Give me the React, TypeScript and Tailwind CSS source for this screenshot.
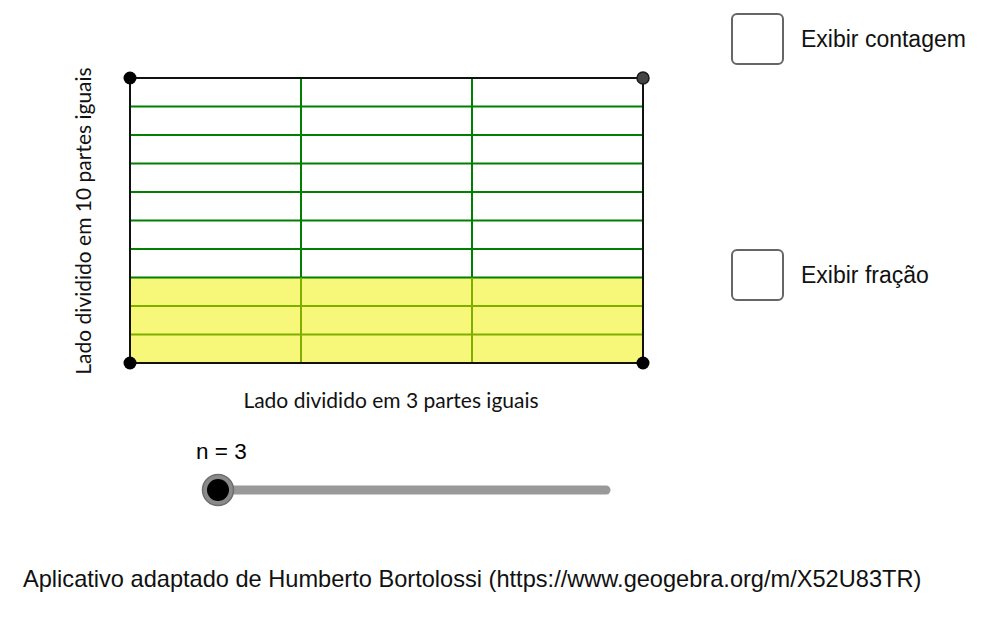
import React from 'react';

const X0 = 130;
const X1 = 643;
const Y0 = 78;
const Y1 = 363;
const ROWS = 10;
const COLS = 3;
const SHADED = 3;

const GREEN = '#007f00';
const LIME = '#7fb000';

function Figure() {
  const rowH = (Y1 - Y0) / ROWS;
  const colW = (X1 - X0) / COLS;
  const shadeTop = Y1 - rowH * SHADED;

  return (
    <svg width={700} height={552} className="block shrink-0">
      {/* shaded rows */}
      <rect x={X0} y={shadeTop} width={X1 - X0} height={Y1 - shadeTop} fill="#f7f779" />

      {/* horizontal divisions */}
      {Array.from({ length: ROWS - 1 }, (_, i) => {
        const y = Y0 + rowH * (i + 1);
        return (
          <line key={'h' + i} x1={X0} x2={X1} y1={y} y2={y} stroke={y > shadeTop + 1 ? LIME : GREEN} strokeWidth={2} />
        );
      })}

      {/* vertical divisions */}
      {Array.from({ length: COLS - 1 }, (_, i) => {
        const x = X0 + colW * (i + 1);
        return (
          <g key={'v' + i}>
            <line x1={x} x2={x} y1={Y0} y2={shadeTop} stroke={GREEN} strokeWidth={2} />
            <line x1={x} x2={x} y1={shadeTop} y2={Y1} stroke={LIME} strokeWidth={2} />
          </g>
        );
      })}

      {/* outline */}
      <rect x={X0} y={Y0} width={X1 - X0} height={Y1 - Y0} fill="none" stroke="#111" strokeWidth={2} />

      {/* corner points */}
      <circle cx={X0} cy={Y0} r={6.5} fill="#000" />
      <circle cx={X0} cy={Y1} r={6.5} fill="#000" />
      <circle cx={X1} cy={Y1} r={6.5} fill="#000" />
      <circle cx={X1} cy={Y0} r={6} fill="#444" stroke="#1a1a1a" strokeWidth={1.5} />

      {/* labels */}
      <text
        x={391}
        y={408}
        textAnchor="middle"
        fontFamily="Lato, 'DejaVu Sans', sans-serif"
        fontSize={21}
        fill="#111"
      >
        Lado dividido em 3 partes iguais
      </text>
      <text
        transform="translate(91 221) rotate(-90)"
        textAnchor="middle"
        fontFamily="Lato, 'DejaVu Sans', sans-serif"
        fontSize={21}
        fill="#111"
      >
        Lado dividido em 10 partes iguais
      </text>

      {/* slider */}
      <text x={196} y={459} fontFamily="'Liberation Sans', Arial, sans-serif" fontSize={22.5} fill="#000">
        n = 3
      </text>
      <line x1={218} x2={606} y1={490} y2={490} stroke="#999" strokeWidth={9} strokeLinecap="round" />
      <circle cx={218} cy={490} r={15.5} fill="#8a8a8a" stroke="#6e6e6e" strokeWidth={1.5} />
      <circle cx={218} cy={490} r={11} fill="#000" />
    </svg>
  );
}

function Check({ label, className }: { label: string; className?: string }) {
  return (
    <label className={'flex items-center gap-[17px] ' + (className ?? '')}>
      <span className="w-[53px] h-[52px] rounded-[6px] border-2 border-[#666] bg-white" />
      <span className="text-[23px] text-[#111]">{label}</span>
    </label>
  );
}

export default function App() {
  return (
    <div className="w-[996px] h-[626px] bg-white flex flex-col overflow-hidden font-['Liberation_Sans',Arial,sans-serif]">
      <div className="flex h-[552px]">
        <Figure />
        <div className="flex flex-col pl-[31px] pt-[13px]">
          <Check label="Exibir contagem" />
          <Check label="Exibir fração" className="mt-[184px]" />
        </div>
      </div>
      <p className="pl-[23px] mt-[13px] text-[23.6px] leading-[28px] text-[#111]">
        Aplicativo adaptado de Humberto Bortolossi (https://www.geogebra.org/m/X52U83TR)
      </p>
    </div>
  );
}
